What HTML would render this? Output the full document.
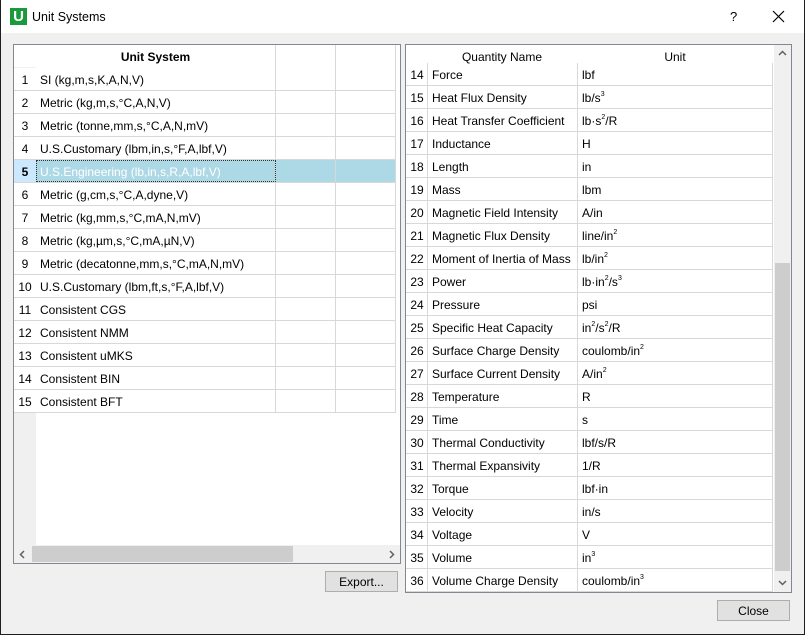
<!DOCTYPE html>
<html><head><meta charset="utf-8"><style>
*{margin:0;padding:0;box-sizing:border-box}
body{width:805px;height:635px;background:#1e1e1e;font-family:"Liberation Sans",sans-serif;font-size:12px;color:#000;position:relative;overflow:hidden}
.win{position:absolute;left:1px;top:0;width:803px;height:634px;background:#f0f0f0}
.title{position:absolute;left:0;top:0;width:803px;height:33px;background:#fff}
.abs{position:absolute}
.frame{position:absolute;border:1px solid #828790;background:#fff}
.row{position:absolute;height:23px;border-bottom:1px solid #d8d8d8;white-space:nowrap}
.c{position:absolute;top:0;height:22px;line-height:24px;border-right:1px solid #d8d8d8;padding-left:4px;overflow:hidden}
.n{position:absolute;top:0;height:22px;line-height:24px;text-align:center}
sup{font-size:7px;vertical-align:6px;line-height:0}
.btn{position:absolute;border:1px solid #adadad;background:#e1e1e1;text-align:center;line-height:20px}
</style></head><body>
<div class="win">
<div class="title">
 <div class="abs" style="left:9px;top:8px;width:17px;height:17px;background:#1a9a3c;color:#fff;font-weight:bold;font-size:15px;line-height:17px;text-align:center">U</div>
 <div class="abs" style="left:31px;top:10px;font-size:12.5px">Unit Systems</div>
 <div class="abs" style="left:729px;top:9px;font-size:13px">?</div>
 <svg class="abs" style="left:771px;top:10px" width="13" height="13"><path d="M1 1L12 12M12 1L1 12" stroke="#000" stroke-width="1.2"/></svg>
</div>

<!-- left table -->
<div class="frame" style="left:12px;top:44px;width:388px;height:520px">
 <div class="abs" style="left:0;top:22px;width:22px;height:496px;background:#f0f0f0"></div>
 <div class="abs" style="left:22px;top:0;width:240px;height:23px;line-height:24px;text-align:center;font-weight:bold;border-right:1px solid #d8d8d8;background:#fff">Unit System</div>
 <div class="abs" style="left:262px;top:0;width:60px;height:23px;border-right:1px solid #d8d8d8;background:#fff"></div>
 <div class="abs" style="left:322px;top:0;width:60px;height:23px;border-right:1px solid #d8d8d8;background:#fff"></div>
 <div id="L"></div>
 <div class="abs" style="left:0;top:500px;width:386px;height:18px;background:#f0f0f0">
  <svg class="abs" style="left:5px;top:5px" width="6" height="9"><path d="M5 1L1.5 4.5L5 8" stroke="#606060" stroke-width="1.5" fill="none"/></svg>
  <div class="abs" style="left:18px;top:1px;width:261px;height:16px;background:#cdcdcd"></div>
  <svg class="abs" style="left:375px;top:5px" width="6" height="9"><path d="M1 1L4.5 4.5L1 8" stroke="#606060" stroke-width="1.5" fill="none"/></svg>
 </div>
</div>
<div class="btn" style="left:324px;top:571px;width:73px;height:21px">Export...</div>

<!-- right table -->
<div class="frame" style="left:404px;top:44px;width:387px;height:549px">
 <div class="abs" style="left:0;top:0;width:21px;height:547px;background:#fff"></div>
 <div class="abs" style="left:21px;top:0;width:150px;height:19px;line-height:24px;text-align:center">Quantity Name</div>
 <div class="abs" style="left:171px;top:0;width:196px;height:19px;line-height:24px;text-align:center">Unit</div>
 <div id="R"></div>
 <div class="abs" style="left:368px;top:0;width:17px;height:547px;background:#f0f0f0">
  <svg class="abs" style="left:4px;top:5px" width="9" height="6"><path d="M1 5L4.5 1.5L8 5" stroke="#606060" stroke-width="1.5" fill="none"/></svg>
  <div class="abs" style="left:1px;top:218px;width:15px;height:308px;background:#cdcdcd"></div>
  <svg class="abs" style="left:4px;top:535px" width="9" height="6"><path d="M1 1L4.5 4.5L8 1" stroke="#606060" stroke-width="1.5" fill="none"/></svg>
 </div>
</div>
<div class="btn" style="left:716px;top:600px;width:73px;height:21px">Close</div>
</div>
<script>
var L=["SI (kg,m,s,K,A,N,V)","Metric (kg,m,s,°C,A,N,V)","Metric (tonne,mm,s,°C,A,N,mV)","U.S.Customary (lbm,in,s,°F,A,lbf,V)","U.S.Engineering (lb,in,s,R,A,lbf,V)","Metric (g,cm,s,°C,A,dyne,V)","Metric (kg,mm,s,°C,mA,N,mV)","Metric (kg,µm,s,°C,mA,µN,V)","Metric (decatonne,mm,s,°C,mA,N,mV)","U.S.Customary (lbm,ft,s,°F,A,lbf,V)","Consistent CGS","Consistent NMM","Consistent uMKS","Consistent BIN","Consistent BFT"];
var h="";
L.forEach(function(t,i){var s=i==4;var y=23+i*23;
h+='<div class="row" style="left:0;top:'+y+'px;width:382px;'+(s?'background:#add8e6;':'')+'">'
+'<div class="n" style="left:0;width:22px;background:'+(s?'#cce8ff':'#fff')+';'+(s?'font-weight:bold;':'')+'">'+(i+1)+'</div>'
+'<div class="c" style="left:22px;width:240px;'+(s?'color:#fff;outline:1px dotted #333;outline-offset:-1px;':'')+'">'+t+'</div>'
+'<div class="c" style="left:262px;width:60px"></div><div class="c" style="left:322px;width:60px"></div></div>';});
document.getElementById("L").innerHTML=h;
var R=[["Force","lbf"],["Heat Flux Density","lb/s<sup>3</sup>"],["Heat Transfer Coefficient","lb·s<sup>2</sup>/R"],["Inductance","H"],["Length","in"],["Mass","lbm"],["Magnetic Field Intensity","A/in"],["Magnetic Flux Density","line/in<sup>2</sup>"],["Moment of Inertia of Mass","lb/in<sup>2</sup>"],["Power","lb·in<sup>2</sup>/s<sup>3</sup>"],["Pressure","psi"],["Specific Heat Capacity","in<sup>2</sup>/s<sup>2</sup>/R"],["Surface Charge Density","coulomb/in<sup>2</sup>"],["Surface Current Density","A/in<sup>2</sup>"],["Temperature","R"],["Time","s"],["Thermal Conductivity","lbf/s/R"],["Thermal Expansivity","1/R"],["Torque","lbf·in"],["Velocity","in/s"],["Voltage","V"],["Volume","in<sup>3</sup>"],["Volume Charge Density","coulomb/in<sup>3</sup>"]];
h="";
R.forEach(function(r,i){var y=18+i*23;
h+='<div class="row" style="left:0;top:'+y+'px;width:367px;">'
+'<div class="n" style="left:0;width:22px">'+(14+i)+'</div>'
+'<div class="c" style="left:21px;width:151px;border-left:1px solid #d8d8d8">'+r[0]+'</div>'
+'<div class="c" style="left:172px;width:195px">'+r[1]+'</div></div>';});
document.getElementById("R").innerHTML=h;
</script>
</body></html>
